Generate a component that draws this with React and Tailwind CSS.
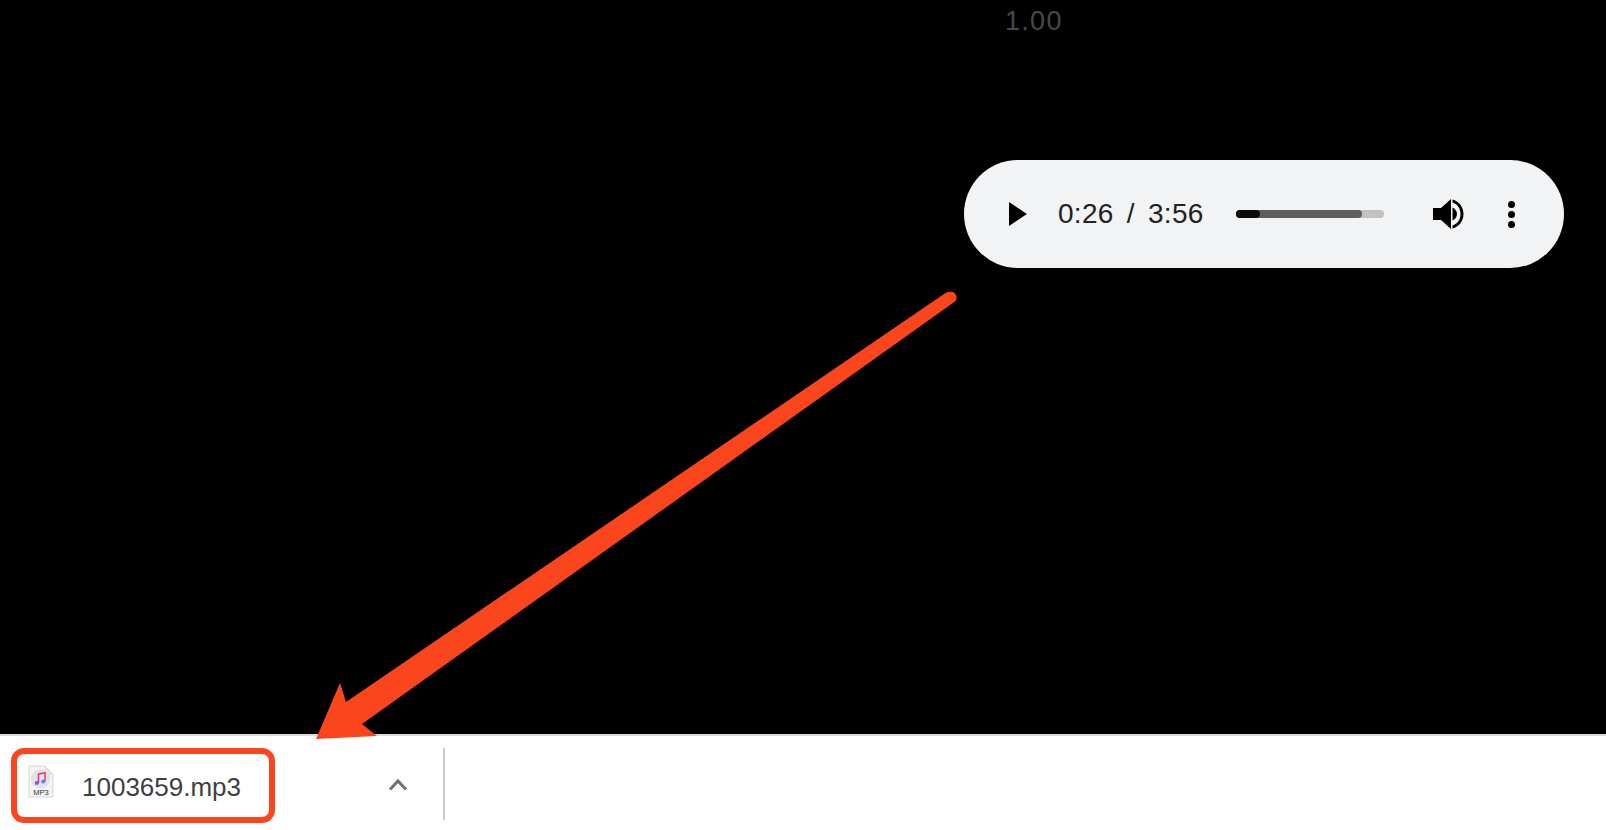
export default function App() {
  return (
    <div className="relative flex h-[830px] w-[1606px] flex-col overflow-hidden bg-white font-['Liberation_Sans',sans-serif]">
      <main className="h-[734px] shrink-0 bg-black">
        <div className="pl-[1005px] pt-[6px] text-[27px] leading-[30px] tracking-[1.3px] text-[#484848]">1.00</div>
        <div className="ml-[964px] mt-[124px] flex h-[108px] w-[600px] items-center rounded-[54px] bg-[#f1f3f4] text-[#222222]">
          <svg className="ml-[45px] shrink-0" width="18" height="24" viewBox="0 0 18 24"><path d="M0 0L18 12L0 24Z" fill="#000" /></svg>
          <span className="ml-[31px] w-[178px] shrink-0 whitespace-nowrap text-[28px] leading-[32px] tracking-[0.3px] [word-spacing:5px]">0:26 / 3:56</span>
          <div className="relative h-[8px] w-[148px] shrink-0 rounded-full bg-[#c2c2c2]">
            <div className="absolute left-0 top-0 h-[8px] w-[126px] rounded-full bg-[#5e5e5e]" />
            <div className="absolute left-0 top-0 h-[8px] w-[24px] rounded-full bg-[#0a0a0a]" />
          </div>
          <svg className="ml-[49px] shrink-0" width="31" height="30" viewBox="0 0 31 30">
            <path d="M0 9H8L18 0V30L8 21H0Z" fill="#000" />
            <rect x="18" y="0" width="1.5" height="30" fill="#f1f3f4" />
            <path d="M19.5 8.5C22.5 10 24 12.5 24 15C24 17.5 22.5 20 19.5 21.5Z" fill="#000" />
            <path d="M19.5 0.5C26 2 30.5 8 30.5 15C30.5 22 26 28 19.5 29.5V26.5C24.5 25 27.5 20.5 27.5 15C27.5 9.5 24.5 5 19.5 3.5Z" fill="#000" />
          </svg>
          <div className="ml-[44px] flex shrink-0 flex-col gap-[3px]">
            <div className="h-[7px] w-[7px] rounded-full bg-black" />
            <div className="h-[7px] w-[7px] rounded-full bg-black" />
            <div className="h-[7px] w-[7px] rounded-full bg-black" />
          </div>
        </div>
      </main>
      <footer className="flex flex-1 items-start border-t-2 border-[#dcdcdc] pl-[11px] pt-[12px]">
        <div className="flex h-[75px] w-[264px] shrink-0 items-center rounded-[13px] border-[6px] border-[#fb451d] pl-[11px]">
          <svg className="mb-[8px] shrink-0" width="26" height="33" viewBox="0 0 26 33">
            <path d="M1 1H17L25 9V32H1Z" fill="#f4f4f4" stroke="#d4d4d4" />
            <path d="M17 1V9H25" fill="#e6e6e6" stroke="#dddddd" />
            <circle cx="12.5" cy="14" r="9" fill="#dfe3ee" stroke="#c8ccd8" strokeWidth="0.5" />
            <path d="M10.5 18V9L17 8V16.5" fill="none" stroke="#ec3f6e" strokeWidth="1.6" />
            <circle cx="8.8" cy="18" r="2" fill="#7c5ce0" />
            <circle cx="15.2" cy="16.5" r="2" fill="#4f86ee" />
            <text x="13" y="29.5" textAnchor="middle" fontSize="7.5" fill="#333" fontFamily="Liberation Sans, sans-serif">MP3</text>
          </svg>
          <span className="ml-[28px] mt-[2px] whitespace-nowrap text-[26px] leading-[30px] text-[#3c4043]">1003659.mp3</span>
        </div>
        <svg className="ml-[113px] mt-[30px] shrink-0" width="20" height="13" viewBox="0 0 20 13">
          <path d="M2 11.5L10 3L18 11.5" fill="none" stroke="#6f7275" strokeWidth="3" />
        </svg>
        <div className="ml-[35px] h-[72px] w-[2px] shrink-0 bg-[#c9c9c9]" />
      </footer>
      <svg className="pointer-events-none absolute left-0 top-0" width="1606" height="830" viewBox="0 0 1606 830">
        <path d="M944 294C948 291 953 291 955 293.5C957 296 957 299.5 955 301.5L362 724L377 736L316 739L340 683L346 702Z" fill="#fb451d" />
      </svg>
    </div>
  );
}
